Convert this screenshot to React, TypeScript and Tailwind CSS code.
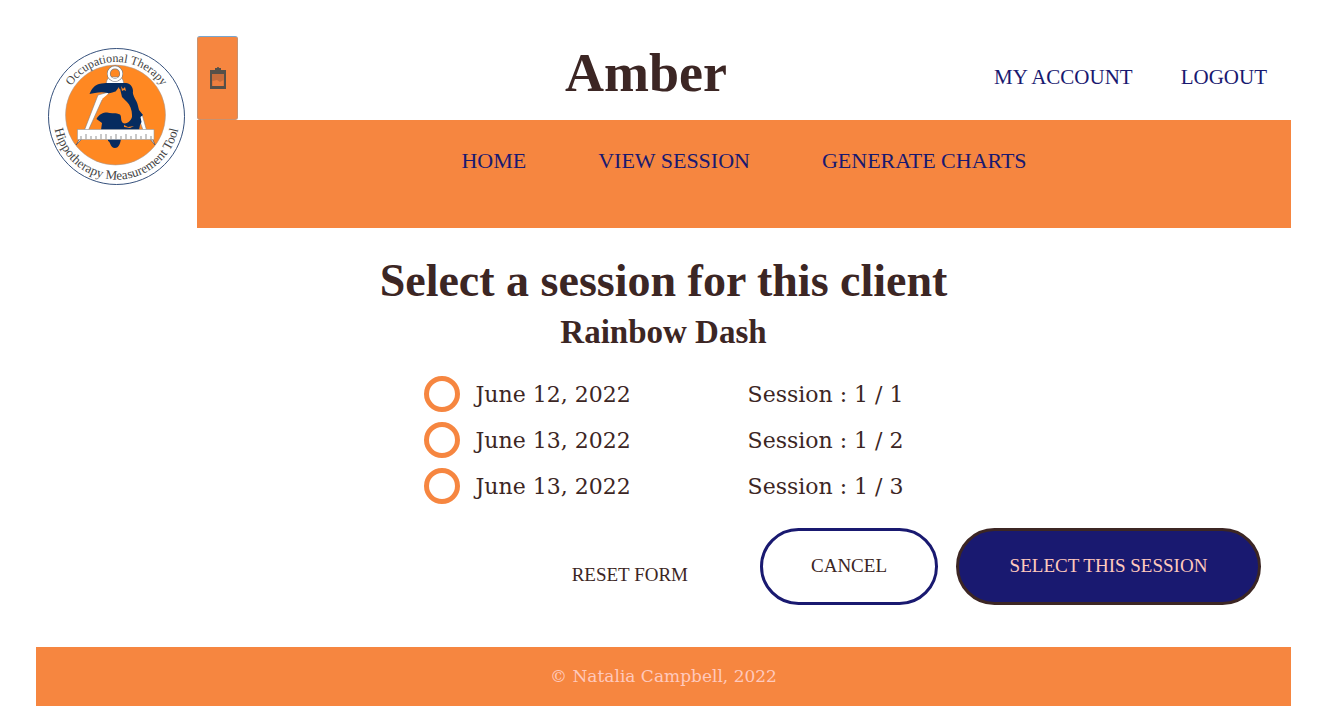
import React from "react";

const sessions = [
  { id: "s1", date: "June 12, 2022", label: "Session : 1 / 1" },
  { id: "s2", date: "June 13, 2022", label: "Session : 1 / 2" },
  { id: "s3", date: "June 13, 2022", label: "Session : 1 / 3" },
];

function Logo() {
  return (
    <svg viewBox="12 12 137 137" className="h-[137px] w-[137px]" role="img" aria-label="Occupational Therapy Hippotherapy Measurement Tool">
      <defs>
        <path id="arc-top" d="M26 80.5 A54.5 54.5 0 0 1 135 80.5" />
        <path id="arc-bottom" d="M18.4 70 A63 63 0 1 0 142.6 70" />
      </defs>
      <circle cx="80.5" cy="80.5" r="68" fill="#fff" stroke="#1f3d6d" strokeWidth="0.9" />
      <circle cx="79.5" cy="79" r="50" fill="#ff8822" stroke="#9a9aa0" strokeWidth="0.5" />
      <g stroke="#7d7d82" strokeWidth="0.6" fill="#fff">
        <path d="M73 41 H85 L87 44 L88 48 H70 L71 44 Z" />
        <path d="M62 59 L73 56 L71 61 L66 64 L52.5 94 H48.5 Z" />
        <path d="M102 80 L106 78 L110.5 94 H107 Z" />
        <path d="M43 104 L46 103 L40 109 Z M114 103 L117 104 L119 109 Z" stroke="#333c55" />
      </g>
      <path
        d="M53.5 58 C56 52 59 49 63 48 C69 46.5 73 47 77 47 L90 47 C94 47 97 51 97 55 C96 60 101 64 102 70 L103 74 L107 79 L104.500 81 L105.500 86 L104 89 L103 94 H65 L66 87 L60.500 83 C63 78 67 76.500 71 76.500 C76 78 80 76 84 78.500 C86 81 84 84 87 87 C90 89 97 84 96 79 C96 74 94 69 91 66 L86 61 L84 52.500 L81 55 C77 56 73 58 72 57 C65 55 58 57 53.500 58 Z"
        fill="#062b5f"
      />
      <path d="M84 61 L83 51 L80 55 L79 60 Z M85 50 L87 53 L89 51 L90 55 L88 54 L86 55 Z" fill="#ff8822" />
      <path d="M88 89 L92 91 L98 90 L94 92 L88 91 Z M72 58 L66 63 L68 65 L72 61 Z" fill="#ff8822" />
      <circle cx="79" cy="37.700" r="6.300" fill="none" stroke="#77777c" strokeWidth="3.600" />
      <circle cx="79" cy="37.700" r="6.300" fill="none" stroke="#fff" strokeWidth="2.400" />
      <path d="M72 103 H85 C84 109 82 112 79 112 C74 112 75 106 72 105 Z" fill="#062b5f" />
      <rect x="41.500" y="93.500" width="76.500" height="10" fill="#fff" stroke="#999" strokeWidth="0.600" />
      <path
        d="M45 103 V100 M50 103 V98 M55 103 V100 M60 103 V100 M65 103 V98 M70 103 V98 M75 103 V100 M80 103 V98 M85 103 V100 M90 103 V98 M95 103 V100 M100 103 V98 M105 103 V100 M110 103 V98 M115 103 V100"
        stroke="#666"
        strokeWidth="0.700"
      />
      <g fill="#444" fontFamily="'Liberation Serif', serif" textAnchor="middle">
        <text fontSize="12">
          <textPath href="#arc-top" startOffset="50%">Occupational Therapy</textPath>
        </text>
        <text fontSize="13">
          <textPath href="#arc-bottom" startOffset="50%">Hippotherapy Measurement Tool</textPath>
        </text>
      </g>
    </svg>
  );
}

function Clipboard() {
  return (
    <svg viewBox="0 0 18 24" className="h-6 w-[18px]" aria-hidden="true">
      <path d="M1 4 H6 V2 H8 C8 0.500 10 0.500 10 2 H12 V4 H17 V23 H1 Z" fill="#555049" />
      <path d="M3 8 H15 V20 H3 Z" fill="#c66d3c" />
      <path d="M3.500 15 L8 14 L11 16 L14.500 14 V20 H3.500 Z" fill="#ed7f3f" />
    </svg>
  );
}

export default function App() {
  return (
    <div className="px-9 pt-9 font-['Liberation_Serif',serif] text-[#3c2624]">
      <header className="flex">
        <a href="#" className="block shrink-0 p-3">
          <Logo />
        </a>
        <div className="flex-1">
          <div className="flex h-[84px] items-stretch">
            <button
              type="button"
              aria-label="Copy"
              className="flex w-[41px] items-center justify-center rounded-[3px] border border-[#c9926f] border-t-[#78a6cf] bg-[#f68640]"
            >
              <Clipboard />
            </button>
            <h1 className="flex-1 pt-1 pl-[60px] text-center text-[54px] leading-[66px] font-bold">Amber</h1>
            <nav className="flex items-center gap-12 pr-6 text-[21px] text-[#191970]">
              <a href="#">MY ACCOUNT</a>
              <a href="#">LOGOUT</a>
            </nav>
          </div>
          <nav className="flex h-[108px] justify-center gap-[72px] bg-[#f68640] pt-[25px] text-[22px] leading-8 text-[#191970]">
            <a href="#">HOME</a>
            <a href="#">VIEW SESSION</a>
            <a href="#">GENERATE CHARTS</a>
          </nav>
        </div>
      </header>

      <main>
        <h2 className="pt-[26px] text-center text-[46px] leading-[54px] font-bold">Select a session for this client</h2>
        <h3 className="pt-1 text-center text-[33px] leading-10 font-bold">Rainbow Dash</h3>
        <form>
          <div className="mx-auto mt-6 flex w-[480px] flex-col gap-[10px] font-['DejaVu_Serif',serif] text-[22px]">
            {sessions.map((s) => (
              <label key={s.id} htmlFor={s.id} className="flex h-9 items-center gap-4">
                <input
                  id={s.id}
                  type="radio"
                  name="session"
                  className="size-9 shrink-0 appearance-none rounded-full border-[5px] border-[#f68640] bg-white checked:bg-[#191970]"
                />
                <span>{s.date}</span>
                <span className="ml-auto">{s.label}</span>
              </label>
            ))}
          </div>
          <div className="mt-6 flex items-center justify-end pr-[30px] text-[19px]">
            <button type="reset" className="mr-[72px] pt-[18px]">
              RESET FORM
            </button>
            <button type="button" className="mr-[18px] h-[77px] rounded-full border-[3px] border-[#191970] px-12">
              CANCEL
            </button>
            <button type="submit" className="h-[77px] min-w-[305px] rounded-full border-[3px] border-[#3c2624] bg-[#191970] px-12 text-[#ffc9bd]">
              SELECT THIS SESSION
            </button>
          </div>
        </form>
      </main>

      <footer className="mt-[42px] bg-[#f68640] py-4 text-center font-['DejaVu_Serif',serif] text-[17px] leading-[27px] text-[#ffc9bd]">
        © Natalia Campbell, 2022
      </footer>
    </div>
  );
}
